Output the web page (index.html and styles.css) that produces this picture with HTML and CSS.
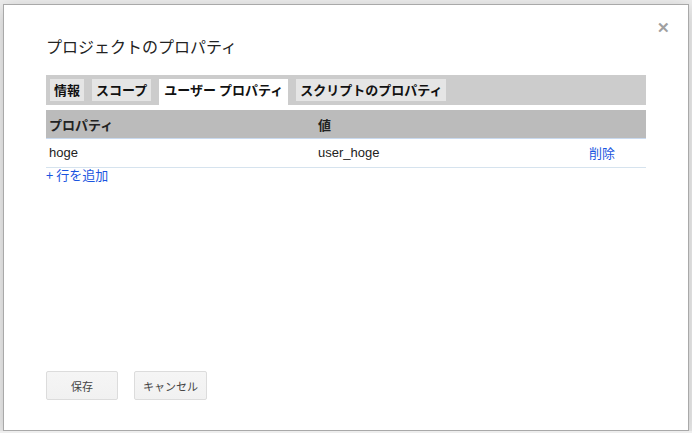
FILE: index.html
```html
<!DOCTYPE html>
<html lang="ja">

<head>
    <meta charset="UTF-8">
    <meta name="viewport" content="width=device-width, initial-scale=1.0">
    <title>プロジェクトのプロパティ</title>
    <link rel="stylesheet" href="styles.css">
</head>

<body>
    <div class="dialog">
        <span class="close">&#x2715;</span>
        <h2 class="dialog-title">プロジェクトのプロパティ</h2>

        <div class="tabs">
            <div class="tab">情報</div>
            <div class="tab">スコープ</div>
            <div class="tab active">ユーザー プロパティ</div>
            <div class="tab">スクリプトのプロパティ</div>
        </div>

        <table class="props">
            <thead>
                <tr>
                    <th class="col-key">プロパティ</th>
                    <th class="col-value">値</th>
                    <th class="col-action"></th>
                </tr>
            </thead>
            <tbody>
                <tr>
                    <td>hoge</td>
                    <td>user_hoge</td>
                    <td><a href="#" class="link">削除</a></td>
                </tr>
            </tbody>
        </table>
        <a href="#" class="link add-row">+ 行を追加</a>

        <div class="buttons">
            <button class="btn save">保存</button>
            <button class="btn">キャンセル</button>
        </div>
    </div>
</body>

</html>
```

FILE: styles.css
```css
body {
    margin: 0;
    background: #eeeeee;
    font-family: "Liberation Sans", Arial, "Noto Sans CJK JP", sans-serif;
    color: #222;
}

.dialog {
    position: relative;
    box-sizing: border-box;
    width: 686px;
    height: 427px;
    margin: 4px 0 0 3px;
    padding: 0 42px 30px 42px;
    background: #fff;
    border: 1px solid #a9a9a9;
    box-shadow: 0 4px 16px rgba(0, 0, 0, 0.2);
    display: flex;
    flex-direction: column;
}

.close {
    position: absolute;
    top: 14px;
    right: 18px;
    font-size: 15px;
    font-weight: bold;
    color: #a0a0a0;
    cursor: pointer;
}

.dialog-title {
    margin: 29px 0 0 0;
    font-size: 16px;
    font-weight: normal;
    line-height: 24px;
    font-family: "Noto Sans CJK JP", sans-serif;
}

.tabs {
    display: flex;
    gap: 8px;
    margin-top: 17px;
    padding: 4px 4px 0 4px;
    background: #cccccc;
    height: 26px;
}

.tab {
    padding: 0 4px;
    background: #e5e5e5;
    font-size: 13px;
    font-weight: bold;
    line-height: 22px;
    font-family: "Noto Sans CJK JP", sans-serif;
    color: #111;
    height: 22px;
}

.tab.active {
    background: #fff;
    height: 26px;
    padding: 0 5px;
}

.props {
    width: 100%;
    margin-top: 5px;
    border-collapse: collapse;
    font-size: 13px;
}

.props th {
    background: #bbbbbb;
    text-align: left;
    font-weight: bold;
    font-family: "Noto Sans CJK JP", sans-serif;
    height: 28px;
    padding: 0 3px;
    border-bottom: 1px solid #c9daf0;
}

.props td {
    height: 26px;
    padding: 0 3px 2px 3px;
    border-bottom: 1px solid #d6e3ee;
}

.col-key {
    width: 263px;
}

.col-value {
    width: 265px;
}

.link {
    color: #1a55e0;
    text-decoration: none;
    font-family: "Noto Sans CJK JP", sans-serif;
    font-size: 13px;
}

.add-row {
    margin-top: 0;
    line-height: 14px;
    align-self: flex-start;
}

.buttons {
    margin-top: auto;
    display: flex;
    gap: 16px;
}

.btn {
    height: 29px;
    min-width: 72px;
    padding: 0 8px;
    background: linear-gradient(#f5f5f5, #f1f1f1);
    border: 1px solid #dcdcdc;
    border-radius: 2px;
    color: #444;
    font-size: 11px;
    font-family: "Noto Sans CJK JP", sans-serif;
    cursor: pointer;
}
```
